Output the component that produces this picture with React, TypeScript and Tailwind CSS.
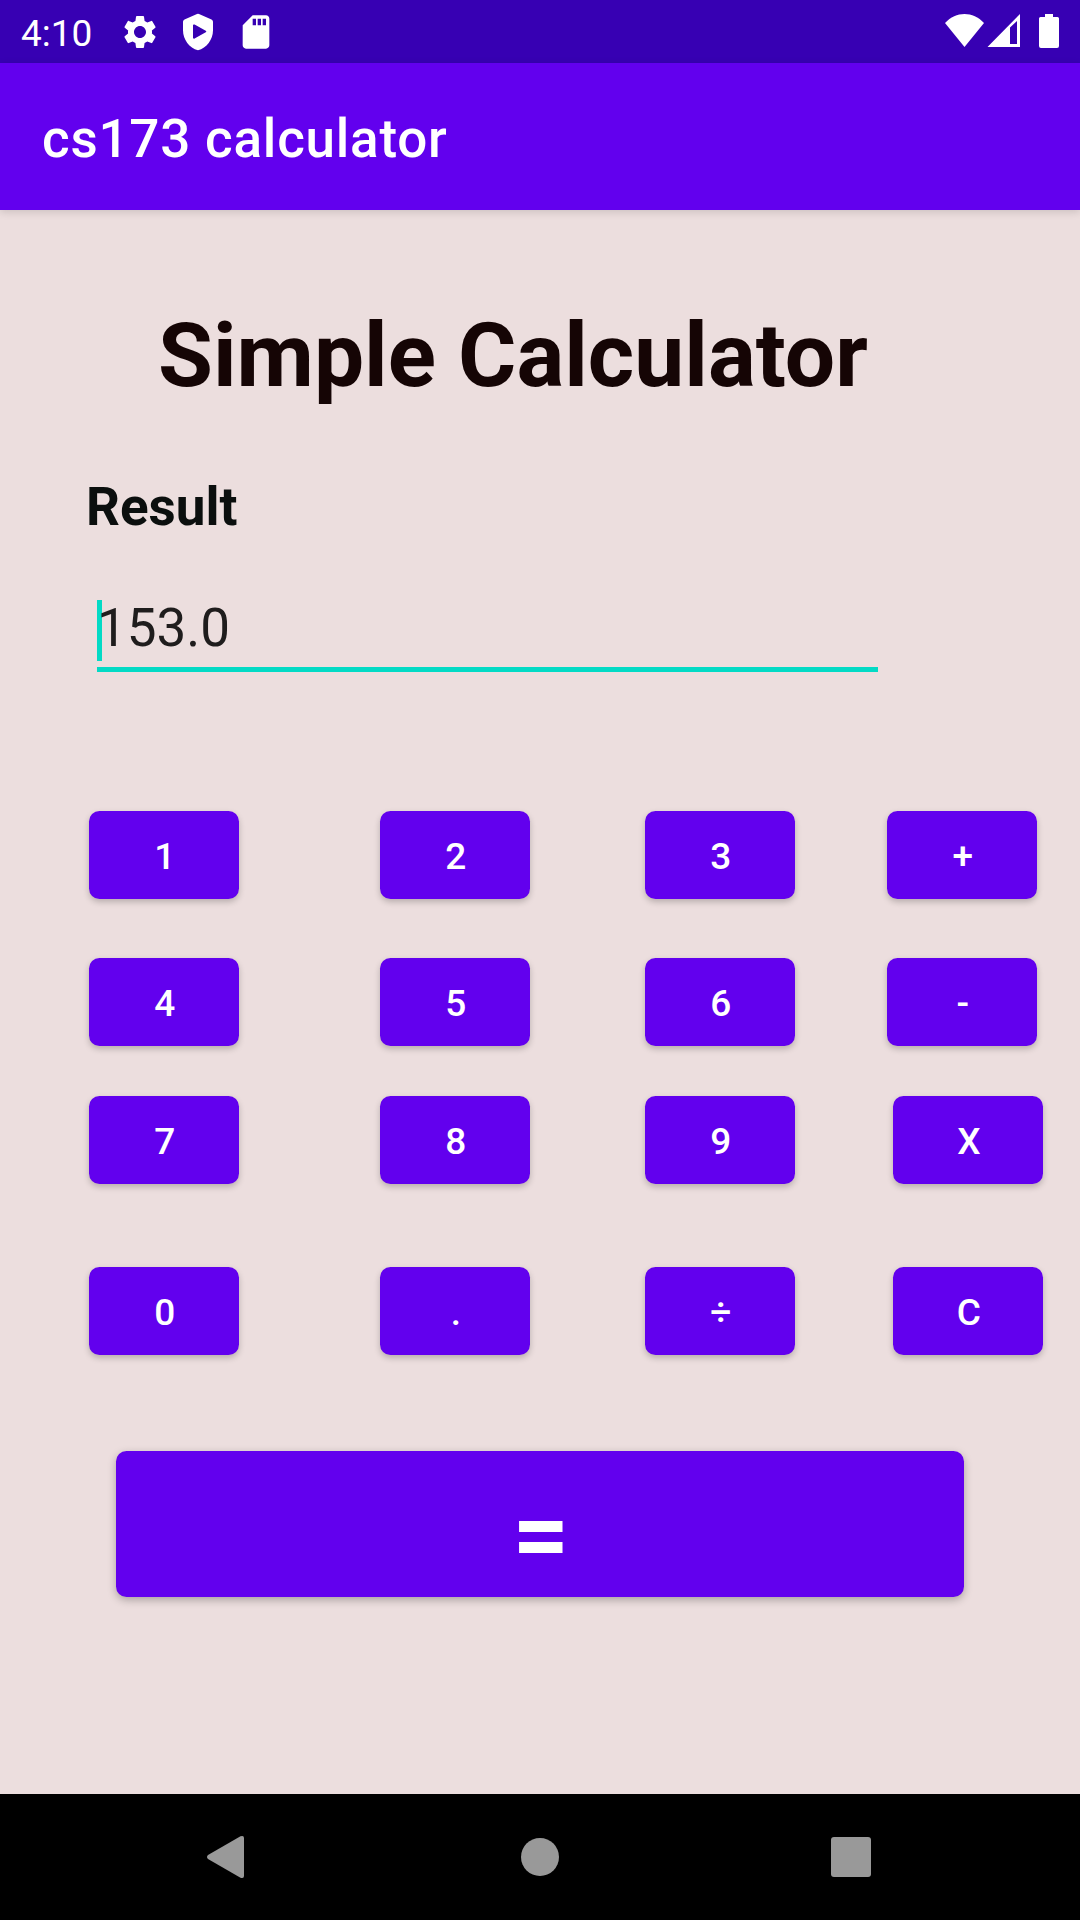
import { MdSettings, MdSdCard } from "react-icons/md";

function ShieldPlayIcon() {
  return (
    <svg viewBox="0 0 24 24" className="size-[40px]" fill="currentColor">
      <path
        fillRule="evenodd"
        d="M11.4 1.25a1.5 1.5 0 0 1 1.2 0L20.1 4.55A1.5 1.5 0 0 1 21 5.9V11c0 5.55-3.84 10.74-9 12-5.16-1.26-9-6.45-9-12V5.9a1.5 1.5 0 0 1 .9-1.35zM9 8.1v7.3a.6.6 0 0 0 .95.5l6.7-3.7a.55.55 0 0 0 0-.95L9.95 7.55A.6.6 0 0 0 9 8.1z"
      />
    </svg>
  );
}

function StatusBar() {
  return (
    <div className="flex h-[63px] items-start bg-[#3700b3] text-white">
      <span className="mt-[12px] ml-[21px] w-[98.5px] text-[37px] leading-[43px]">4:10</span>
      <div className="mt-[12px] flex gap-[18px]">
        <MdSettings className="size-[40px]" />
        <ShieldPlayIcon />
        <MdSdCard className="size-[40px]" />
      </div>
      <svg viewBox="0 0 116 36" className="mt-[13px] mr-[19px] ml-auto h-[36px] w-[116px]" fill="currentColor">
        <path d="M0 10C11 -2 28 -2 39 10L19.5 34z" />
        <path fillRule="evenodd" d="M75 1V34H42.500zM65 14.500V31H72V8z" />
        <path d="M100 1H108V4H112.500Q114 4 114 5.500V33Q114 35 112 35H96Q94 35 94 33V5.500Q94 4 95.500 4H100z" />
      </svg>
    </div>
  );
}

function Key({ label }: { label: string }) {
  return (
    <button className="flex h-[88px] w-[150px] items-center justify-center rounded-[10.5px] bg-[#6200ee] pt-[3px] pl-[5px] text-[37px] leading-[43px] font-medium tracking-[0.0893em] text-white shadow-[0_3px_6px_rgba(0,0,0,0.22)]">
      {label}
    </button>
  );
}

function KeyRow({ keys, className }: { keys: string[]; className: string }) {
  return (
    <div className={`flex ${className}`}>
      <div className="w-[291px]"><Key label={keys[0]} /></div>
      <div className="w-[265px]"><Key label={keys[1]} /></div>
      <Key label={keys[2]} />
      <div className="ml-auto"><Key label={keys[3]} /></div>
    </div>
  );
}

export default function App() {
  return (
    <div className="flex h-[1920px] w-[1080px] flex-col overflow-hidden bg-[#ecdede] font-['Roboto',sans-serif]">
      <StatusBar />
      <header className="flex h-[147px] items-center bg-[#6200ee] pt-[4px] pl-[42px] shadow-[0_2px_8px_rgba(0,0,0,0.14)]">
        <h1 className="text-[53px] leading-[62px] font-medium tracking-[0.0145em] text-white">cs173 calculator</h1>
      </header>
      <main className="flex flex-1 flex-col">
        <h2 className="mt-[93px] ml-[158px] text-[89.25px] leading-[105px] font-bold whitespace-nowrap text-[#150505]">
          Simple Calculator
        </h2>
        <p className="mt-[68px] ml-[86px] text-[53px] leading-[62px] font-bold text-[#0b0f0e]">Result</p>
        <div className="relative mt-[59px] ml-[97px] h-[75px] w-[781px] border-b-[5px] border-[#03dac5]">
          <span className="absolute top-[3px] left-0 h-[61px] w-[5px] bg-[#03dac5]" />
          <span className="relative block text-[53px] leading-[62px] text-[#1f1d1d]">153.0</span>
        </div>
        <KeyRow keys={["1", "2", "3", "+"]} className="mt-[139px] mr-[43px] ml-[89px]" />
        <KeyRow keys={["4", "5", "6", "-"]} className="mt-[59px] mr-[43px] ml-[89px]" />
        <KeyRow keys={["7", "8", "9", "X"]} className="mt-[50px] mr-[37px] ml-[89px]" />
        <KeyRow keys={["0", ".", "÷", "C"]} className="mt-[83px] mr-[37px] ml-[89px]" />
        <button className="mt-[96px] ml-[116px] flex h-[146px] w-[848px] items-center justify-center rounded-[10.5px] bg-[#6200ee] pt-[20px] pl-[2px] text-[99px] leading-[105px] font-bold text-white shadow-[0_3px_8px_rgba(0,0,0,0.28)]">
          =
        </button>
      </main>
      <nav className="flex h-[126px] items-center bg-black text-[#999999]">
        <svg viewBox="0 0 38 44" className="ml-[206px] h-[44px] w-[38px]" fill="currentColor">
          <path d="M2 20L34.500 1.300Q38 0 38 3V41Q38 44 34.500 42.700L2 24Q0 22 2 20z" />
        </svg>
        <div className="ml-[277px] size-[38px] rounded-full bg-[#999999]" />
        <div className="ml-[272px] size-[40px] rounded-[3px] bg-[#999999]" />
      </nav>
    </div>
  );
}
